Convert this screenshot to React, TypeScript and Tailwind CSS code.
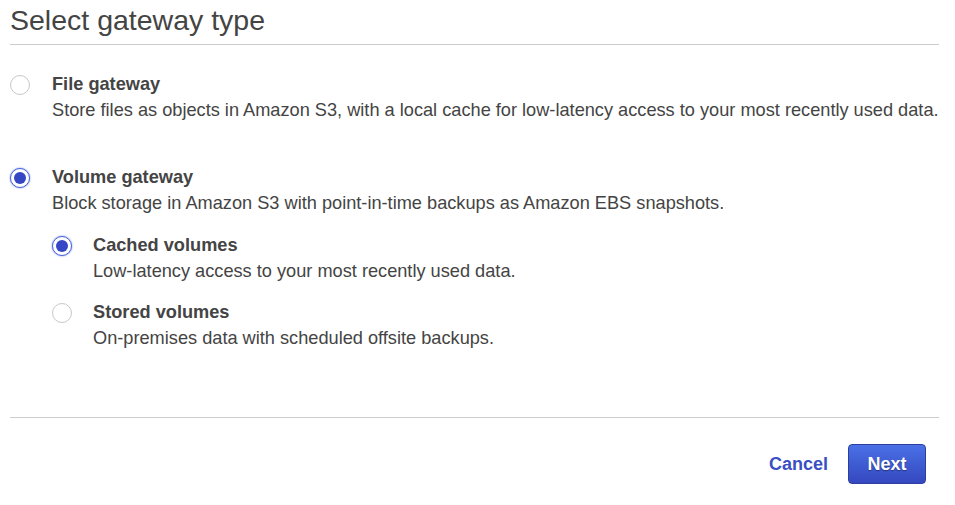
import React, { useState } from "react";

function Radio({ checked, onClick }: { checked: boolean; onClick: () => void }) {
  return (
    <button
      onClick={onClick}
      className={`flex h-[20px] w-[20px] shrink-0 items-center justify-center rounded-full border bg-white ${
        checked ? "border-[#4a63d8] shadow-[0_0_2px_#6b86f0]" : "border-[#c8c8c8]"
      }`}
    >
      {checked && <span className="h-[12px] w-[12px] rounded-full bg-[#3547c4]" />}
    </button>
  );
}

function Option({
  label,
  desc,
  checked,
  onClick,
  nested,
  children,
}: {
  label: string;
  desc: string;
  checked: boolean;
  onClick: () => void;
  nested?: boolean;
  children?: React.ReactNode;
}) {
  return (
    <div className={`flex ${nested ? "gap-[21px]" : "gap-[22px]"}`}>
      <div className="pt-[4px]">
        <Radio checked={checked} onClick={onClick} />
      </div>
      <div className="flex flex-col">
        <div className="text-[18.2px] font-bold leading-[26px] text-[#444]">{label}</div>
        <div className="text-[18.2px] leading-[26px] text-[#444]">{desc}</div>
        {children}
      </div>
    </div>
  );
}

export default function App() {
  const [type, setType] = useState("volume");
  const [vol, setVol] = useState("cached");

  return (
    <div className="h-[505px] w-[955px] bg-white pl-[10px] pr-[16px]" style={{ fontFamily: '"Liberation Sans", Arial, sans-serif' }}>
      <h1 className="border-b border-[#ccc] pb-[6px] pt-[2px] text-[28.5px] font-normal leading-[36px] text-[#444]">
        Select gateway type
      </h1>

      <div className="flex flex-col gap-[41px] pt-[26px]">
        <Option
          label="File gateway"
          desc="Store files as objects in Amazon S3, with a local cache for low-latency access to your most recently used data."
          checked={type === "file"}
          onClick={() => setType("file")}
        />
        <Option
          label="Volume gateway"
          desc="Block storage in Amazon S3 with point-in-time backups as Amazon EBS snapshots."
          checked={type === "volume"}
          onClick={() => setType("volume")}
        >
          <div className="flex flex-col gap-[15px] pt-[16px]">
            <Option
              nested
              label="Cached volumes"
              desc="Low-latency access to your most recently used data."
              checked={vol === "cached"}
              onClick={() => setVol("cached")}
            />
            <Option
              nested
              label="Stored volumes"
              desc="On-premises data with scheduled offsite backups."
              checked={vol === "stored"}
              onClick={() => setVol("stored")}
            />
          </div>
        </Option>
      </div>

      <div className="mt-[66px] border-t border-[#ccc]" />

      <div className="flex items-center justify-end gap-[20px] pr-[13px] pt-[26px]">
        <button className="text-[18px] font-bold text-[#3a4fc4]">Cancel</button>
        <button className="h-[40px] w-[78px] rounded-[4px] border border-[#2c3f9e] bg-gradient-to-b from-[#4a70e6] to-[#3548bf] text-[18px] font-bold text-white [text-shadow:0_1px_1px_rgba(0,0,0,0.4)]">
          Next
        </button>
      </div>
    </div>
  );
}
